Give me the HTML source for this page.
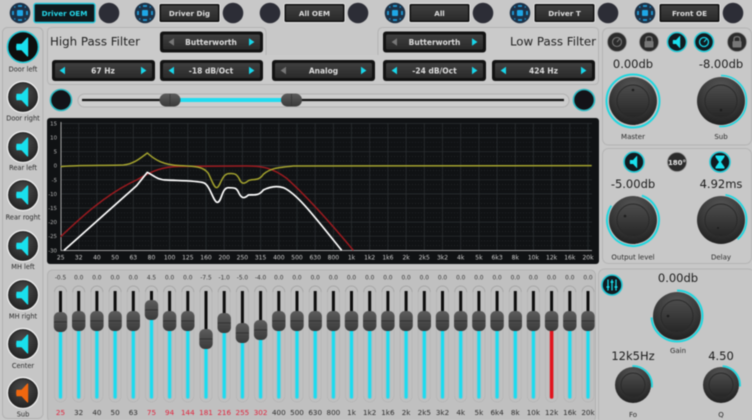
<!DOCTYPE html>
<html><head><meta charset="utf-8"><style>
html,body{margin:0;padding:0;background:#c8c8c8}
svg{display:block;filter:blur(.45px)}
text{font-family:"DejaVu Sans","Liberation Sans",sans-serif;text-anchor:middle}
.top{font-size:7.2px;font-weight:bold;fill:#dedede}
.cb{font-size:7.5px;font-weight:bold;fill:#dcdcdc}
.lab{font-size:6.6px;fill:#2b2b2b}
.val{font-size:11.5px;fill:#1c1c1c}
.fv{font-size:5.8px;fill:#333}
.fl{font-size:7.2px;fill:#2b2b2b}
.flr{font-size:7.2px;fill:#e0233c}
.gx{font-size:6px;fill:#cfcfcf}
.gy{font-size:5.4px;fill:#b9b9b9;text-anchor:end}
.h{font-size:11.8px;fill:#222}
.bk{stroke:#0d0d0d;stroke-width:3;fill:none}
.cy{stroke:#19dcf0;stroke-width:3;fill:none}
.gl{stroke:#7fc4d2;stroke-width:5;fill:none;opacity:.55}
</style></head><body>
<svg width="752" height="420" viewBox="0 0 752 420" xmlns="http://www.w3.org/2000/svg">
<defs>
<linearGradient id="hg" x1="0" y1="0" x2="0" y2="1"><stop offset="0" stop-color="#5c5c5c"/><stop offset="1" stop-color="#3a3a3a"/></linearGradient>
<linearGradient id="bg" x1="0" y1="0" x2="0" y2="1"><stop offset="0" stop-color="#3f3f3f"/><stop offset="1" stop-color="#2a2a2a"/></linearGradient>
<linearGradient id="cap" x1="0" y1="0" x2="0" y2="1"><stop offset="0" stop-color="#4c4c4c"/><stop offset="1" stop-color="#272727"/></linearGradient>
<radialGradient id="kb" cx=".5" cy=".25" r=".85"><stop offset="0" stop-color="#575757"/><stop offset=".6" stop-color="#343434"/><stop offset="1" stop-color="#181818"/></radialGradient>
<radialGradient id="sp" cx=".5" cy=".35" r=".7"><stop offset="0" stop-color="#4c4c4c"/><stop offset="1" stop-color="#222"/></radialGradient>
<g id="k"><rect x="-6.7" y="-10" width="13.4" height="20" rx="5.5" fill="url(#hg)"/><path d="M-6.5 0H6.5" stroke="#2a2a2a" stroke-width=".7"/></g>
<g id="pill"><rect x="-6" y="-114" width="12" height="116" rx="6" fill="none" stroke="#b4b4b4" stroke-width=".7"/><path d="M-6 -108A6 6 0 0 1 6 -108" fill="none" stroke="#a2a2a2" stroke-width=".8"/></g>
<g id="eq"><circle r="10.3" fill="#1d3146"/><rect x="-3" y="-3" width="6" height="6" rx="1" fill="#1ea6e6"/><path d="M-2 -7H2M-2 7H2M-7 -2V2M7 -2V2" stroke="#1e9bd8" stroke-width="1.8"/><path d="M-6 -6H-4.5M4.5 -6H6M-6 6H-4.5M4.5 6H6" stroke="#1b7fb5" stroke-width="1.6"/></g>
<circle id="dk" r="10.3" fill="#2c2d36"/>
<path id="spk" d="M-6.5 -3.2H-1.5L4.2 -9.4Q5.2 -10 5.2 -8.8V8.8Q5.2 10 4.2 9.4L-1.5 3.2H-6.5Q-7.3 0 -6.5 -3.2Z"/>
<g id="sb"><circle r="15.5" fill="#222" stroke="#f2f2f2" stroke-width="1.2"/><circle r="13.8" fill="url(#sp)"/></g>
<g id="kb1"><circle r="24" fill="url(#kb)"/><circle r="16" fill="url(#cap)" stroke="#2a2a2a"/></g>
<g id="kb2"><circle r="18" fill="url(#kb)"/><circle r="12" fill="url(#cap)" stroke="#2a2a2a"/></g>
<g id="lk"><circle r="9.5" fill="#2b2b2b" stroke="#8d8d8d" stroke-width=".7"/><path d="M-3 -1V-3Q-3 -5.4 0 -5.4T3 -3V-1" fill="none" stroke="#777" stroke-width="1.3"/><rect x="-4.5" y="-1" width="9" height="6.5" rx="1" fill="#777"/></g>
<g id="tp"><rect x="0" y="0" width="61" height="19" rx="2" fill="#111" stroke="#e3e3e3" stroke-width="1"/><rect x="2" y="2" width="57" height="15" rx="1" fill="url(#bg)"/></g>
<g id="cbx"><rect x="0" y="0" width="103" height="21" rx="3" fill="#121212"/><rect x="3" y="3" width="97" height="15" rx="1.5" fill="url(#bg)"/></g>
<path id="al" d="M0 -3.8V3.8L-5.4 0Z"/>
<path id="ar" d="M0 -3.8V3.8L5.4 0Z"/>
</defs>

<rect width="752" height="420" fill="#c8c8c8"/>

<!-- top row -->
<use href="#eq" x="20" y="13"/><rect x="34" y="3.5" width="61" height="19" rx="2" fill="#10181c" stroke="#22c8dc" stroke-width="1.4"/><text x="64.5" y="15.8" class="top" style="fill:#25d8ea">Driver OEM</text><use href="#dk" x="109" y="13"/>
<use href="#eq" x="145" y="13"/><use href="#tp" x="159" y="3.5"/><text x="189.5" y="15.8" class="top">Driver Dig</text><use href="#dk" x="233" y="13"/>
<use href="#dk" x="270" y="13"/><use href="#tp" x="284" y="3.5"/><text x="314.5" y="15.8" class="top">All OEM</text><use href="#dk" x="358" y="13"/>
<use href="#eq" x="395" y="13"/><use href="#tp" x="409" y="3.5"/><text x="439.5" y="15.8" class="top">All</text><use href="#dk" x="483" y="13"/>
<use href="#eq" x="520" y="13"/><use href="#tp" x="534" y="3.5"/><text x="564.5" y="15.8" class="top">Driver T</text><use href="#dk" x="608" y="13"/>
<use href="#eq" x="645" y="13"/><use href="#tp" x="659" y="3.5"/><text x="689.5" y="15.8" class="top">Front OE</text><use href="#dk" x="733" y="13"/>

<!-- sidebar -->
<rect x="2.5" y="27.5" width="40.5" height="391" rx="5" fill="#c6c6c6" stroke="#b2b2b2"/>
<circle cx="23" cy="47" r="15.5" fill="#0e0e0e" stroke="#22c9d6" stroke-width="1.6"/><use href="#spk" x="23" y="47" fill="#19e0ee"/><text x="23" y="71.5" class="lab">Door left</text>
<use href="#sb" x="23" y="97"/><use href="#spk" x="23" y="97" fill="#19e0ee"/><text x="23" y="120.5" class="lab">Door right</text>
<use href="#sb" x="23" y="147"/><use href="#spk" x="23" y="147" fill="#19e0ee"/><text x="23" y="170" class="lab">Rear left</text>
<use href="#sb" x="23" y="195"/><use href="#spk" x="23" y="195" fill="#19e0ee"/><text x="23" y="219.5" class="lab">Rear roght</text>
<use href="#sb" x="23" y="246"/><use href="#spk" x="23" y="246" fill="#19e0ee"/><text x="23" y="269" class="lab">MH left</text>
<use href="#sb" x="23" y="295"/><use href="#spk" x="23" y="295" fill="#19e0ee"/><text x="23" y="318.5" class="lab">MH right</text>
<use href="#sb" x="23" y="344"/><use href="#spk" x="23" y="344" fill="#19e0ee"/><text x="23" y="368" class="lab">Center</text>
<use href="#sb" x="23" y="393"/><use href="#spk" x="23" y="393" fill="#f0670f"/><text x="23" y="416.5" class="lab">Sub</text>

<!-- filter panel -->
<path d="M52 27.5H261Q266 27.5 266 33V84.5H52Q47.5 84.5 47.5 80V32Q47.5 27.5 52 27.5Z" fill="#cacaca" stroke="#b4b4b4"/>
<path d="M383 27.5H594Q598.5 27.5 598.5 32V80Q598.5 84.5 594 84.5H378V33Q378 27.5 383 27.5Z" fill="#cacaca" stroke="#b4b4b4"/>
<rect x="265" y="55" width="114" height="29" fill="#cacaca"/><path d="M266 84.5H378" stroke="#b4b4b4"/>
<text x="50" y="45.5" class="h" style="text-anchor:start">High Pass Filter</text>
<text x="596" y="45.5" class="h" style="text-anchor:end">Low Pass Filter</text>
<use href="#cbx" x="160" y="31.5"/><use href="#al" x="174" y="42" fill="#777"/><use href="#ar" x="249" y="42" fill="#19d6ea"/><text x="211" y="44.8" class="cb">Butterworth</text>
<use href="#cbx" x="52" y="60"/><use href="#al" x="65" y="70.5" fill="#19d6ea"/><use href="#ar" x="141" y="70.5" fill="#19d6ea"/><text x="103" y="73.3" class="cb">67 Hz</text>
<use href="#cbx" x="160" y="60"/><use href="#al" x="174" y="70.5" fill="#19d6ea"/><use href="#ar" x="249" y="70.5" fill="#19d6ea"/><text x="211" y="73.3" class="cb">-18 dB/Oct</text>
<use href="#cbx" x="272" y="60"/><use href="#al" x="286" y="70.5" fill="#777"/><use href="#ar" x="361" y="70.5" fill="#19d6ea"/><text x="323.5" y="73.3" class="cb">Analog</text>
<use href="#cbx" x="383" y="31.5"/><use href="#al" x="397" y="42" fill="#777"/><use href="#ar" x="472" y="42" fill="#19d6ea"/><text x="434.5" y="44.8" class="cb">Butterworth</text>
<use href="#cbx" x="383" y="60"/><use href="#al" x="397" y="70.5" fill="#19d6ea"/><use href="#ar" x="472" y="70.5" fill="#19d6ea"/><text x="434.5" y="73.3" class="cb">-24 dB/Oct</text>
<use href="#cbx" x="492" y="60"/><use href="#al" x="506" y="70.5" fill="#19d6ea"/><use href="#ar" x="581" y="70.5" fill="#19d6ea"/><text x="543.5" y="73.3" class="cb">424 Hz</text>

<!-- crossover slider -->
<circle cx="61" cy="100" r="10.5" fill="#131318" stroke="#2bb9c2" stroke-width="1.6"/>
<circle cx="584" cy="100" r="10.5" fill="#131318" stroke="#2bb9c2" stroke-width="1.6"/>
<rect x="78" y="94" width="491" height="13" rx="6.5" fill="#cdcdcd" stroke="#b2b2b2"/>
<path d="M82 100H564" stroke="#141414" stroke-width="2.2"/>
<path d="M170 100H291" stroke="#22dcf0" stroke-width="4"/>
<rect x="159.5" y="93.5" width="21" height="13" rx="6.5" fill="url(#hg)"/><path d="M170 94V106" stroke="#333" stroke-width=".7"/>
<rect x="281" y="93.5" width="21" height="13" rx="6.5" fill="url(#hg)"/><path d="M291.5 94V106" stroke="#333" stroke-width=".7"/>

<!-- graph -->
<rect x="47" y="118" width="552" height="146" rx="3" fill="#101214"/>
<g stroke="#2c3033" stroke-width=".7" fill="none">
<path d="M78.7 123V250M96.9 123V250M115.1 123V250M133.3 123V250M151.5 123V250M169.6 123V250M187.8 123V250M206 123V250M224.2 123V250M242.4 123V250M260.6 123V250M278.8 123V250M297 123V250M315.2 123V250M333.4 123V250M351.5 123V250M369.7 123V250M387.9 123V250M406.1 123V250M424.3 123V250M442.5 123V250M460.7 123V250M478.9 123V250M497.1 123V250M515.3 123V250M533.4 123V250M551.6 123V250M569.8 123V250M588 123V250"/>
<path d="M61 123.5H592M61 137.6H592M61 151.7H592M61 179.8H592M61 193.9H592M61 208H592M61 222.1H592M61 236.2H592"/>
<path stroke-dasharray="1 2" stroke="#262a2d" d="M61 128.2H592M61 132.9H592M61 142.3H592M61 147H592M61 156.4H592M61 161.1H592M61 170.5H592M61 175.2H592M61 184.6H592M61 189.3H592M61 198.7H592M61 203.4H592M61 212.8H592M61 217.5H592M61 226.9H592M61 231.6H592M61 240.9H592M61 245.6H592"/>
</g>
<path d="M61 122V250.5H592" stroke="#c9c9c9" stroke-width=".8" fill="none"/>
<path d="M61 165.7H592" stroke="#3a3d40" stroke-width=".8"/>
<g transform="translate(40 115) scale(.33333)" fill="none" stroke-linejoin="round">
<path d="M62 365C120 310 200 235 290 195C340 165 370 155 420 154L620 153C670 153 700 160 740 190C790 235 860 310 940 406" stroke="#9c1a1f" stroke-width="4.5"/>
<path d="M62 155C100 150 200 152 250 150C280 148 300 130 322 114C345 135 370 150 420 152C470 154 490 155 505 175C515 195 522 218 530 218C540 218 545 178 565 176C585 174 590 178 597 190C603 205 610 210 625 197C640 190 655 200 670 178C690 160 710 158 760 153L1655 152" stroke="#a4a32e" stroke-width="4.5"/>
<path d="M72 406L290 212L322 172C340 180 350 195 380 195C420 197 470 197 490 203C510 208 520 262 532 262C545 262 545 218 565 218C585 218 590 218 597 235C605 250 612 252 625 240C640 238 655 245 670 225C690 215 710 212 730 218C770 235 820 300 905 406" stroke="#fff" stroke-width="5"/>
</g>
<text x="57" y="125.5" class="gy">15</text><text x="57" y="139.5" class="gy">10</text><text x="57" y="153.6" class="gy">5</text><text x="57" y="167.7" class="gy">0</text><text x="57" y="181.8" class="gy">-5</text><text x="57" y="195.9" class="gy">-10</text><text x="57" y="210" class="gy">-15</text><text x="57" y="224" class="gy">-20</text><text x="57" y="238" class="gy">-25</text><text x="57" y="252.3" class="gy">-30</text>
<text x="60.7" y="259.5" class="gx">25</text><text x="78.7" y="259.5" class="gx">32</text><text x="96.9" y="259.5" class="gx">40</text><text x="115.1" y="259.5" class="gx">50</text><text x="133.3" y="259.5" class="gx">63</text><text x="151.5" y="259.5" class="gx">80</text><text x="169.6" y="259.5" class="gx">100</text><text x="187.8" y="259.5" class="gx">125</text><text x="206" y="259.5" class="gx">160</text><text x="224.2" y="259.5" class="gx">200</text><text x="242.4" y="259.5" class="gx">250</text><text x="260.6" y="259.5" class="gx">315</text><text x="278.8" y="259.5" class="gx">400</text><text x="297" y="259.5" class="gx">500</text><text x="315.2" y="259.5" class="gx">630</text><text x="333.4" y="259.5" class="gx">800</text><text x="351.5" y="259.5" class="gx">1k</text><text x="369.7" y="259.5" class="gx">1k2</text><text x="387.9" y="259.5" class="gx">1k6</text><text x="406.1" y="259.5" class="gx">2k</text><text x="424.3" y="259.5" class="gx">2k5</text><text x="442.5" y="259.5" class="gx">3k2</text><text x="460.7" y="259.5" class="gx">4k</text><text x="478.9" y="259.5" class="gx">5k</text><text x="497.1" y="259.5" class="gx">6k3</text><text x="515.3" y="259.5" class="gx">8k</text><text x="533.4" y="259.5" class="gx">10k</text><text x="551.6" y="259.5" class="gx">12k</text><text x="569.8" y="259.5" class="gx">16k</text><text x="588" y="259.5" class="gx">20k</text>

<!-- right panels -->
<rect x="602.5" y="28" width="149" height="117" rx="6" fill="#c8c8c8" stroke="#b4b4b4"/>
<circle cx="617" cy="42" r="9.5" fill="#2b2b2b" stroke="#8d8d8d" stroke-width=".7"/><circle cx="617" cy="42" r="4.5" fill="none" stroke="#777" stroke-width="1.1"/><path d="M617 42L619.5 39" stroke="#777"/>
<use href="#lk" x="649" y="42"/>
<circle cx="677" cy="42" r="9.5" fill="#111a20" stroke="#22c9d6" stroke-width="1.5"/><use href="#spk" transform="translate(677 42) scale(.62)" fill="#19e0ee"/>
<circle cx="704" cy="42" r="9.5" fill="#111a20" stroke="#22c9d6" stroke-width="1.5"/><circle cx="704" cy="42" r="4.5" fill="none" stroke="#18d6ea" stroke-width="1.3"/><path d="M704 42L706.5 39" stroke="#18d6ea"/>
<use href="#lk" x="737" y="42"/>
<text x="633" y="68" class="val">0.00db</text><text x="721" y="68" class="val">-8.00db</text>
<use href="#kb1" x="633" y="101"/><use href="#kb1" x="721" y="101"/>
<circle cx="633" cy="101" r="26.5" fill="none" stroke="#1fd6df" stroke-width="2"/>
<circle cx="721" cy="101" r="25.5" fill="none" stroke="#1fd6df" stroke-width="1.6" pathLength="360" stroke-dasharray="185 360" transform="rotate(-90 721 101)"/>
<circle cx="633" cy="90" r="1.3" fill="#1d1d1d"/><circle cx="721" cy="110" r="1.3" fill="#1d1d1d"/>
<text x="633" y="139" class="lab" style="font-size:7px">Master</text><text x="721" y="139" class="lab" style="font-size:7px">Sub</text>

<rect x="602.5" y="148.5" width="149" height="115" rx="6" fill="#c8c8c8" stroke="#b4b4b4"/>
<circle cx="634" cy="162" r="10" fill="#111a20" stroke="#22c9d6" stroke-width="1.6"/><use href="#spk" transform="translate(634 162) scale(.62)" fill="#19e0ee"/>
<circle cx="677" cy="162" r="9.5" fill="#2b2b2b" stroke="#8d8d8d" stroke-width=".7"/><text x="677" y="165" style="font-size:7px;font-weight:bold;fill:#e6e6e6">180°</text>
<circle cx="720" cy="162" r="10" fill="#111a20" stroke="#22c9d6" stroke-width="1.6"/><path d="M715.5 155.5H724.5V157L721 162L724.5 167V168.5H715.5V167L719 162L715.5 157Z" fill="#19e0ee"/>
<text x="633" y="188" class="val">-5.00db</text><text x="721" y="188" class="val">4.92ms</text>
<use href="#kb1" x="633" y="220"/><use href="#kb1" x="721" y="220"/>
<circle cx="633" cy="220" r="26" fill="none" stroke="#1fd6df" stroke-width="2" pathLength="360" stroke-dasharray="285 360" transform="rotate(-70 633 220)"/>
<circle cx="721" cy="220" r="25.5" fill="none" stroke="#1fd6df" stroke-width="1.8" pathLength="360" stroke-dasharray="130 360" transform="rotate(-80 721 220)"/>
<circle cx="625" cy="216" r="1.3" fill="#1d1d1d"/><circle cx="718" cy="228" r="1" fill="#1d1d1d"/>
<text x="633" y="259.5" class="lab" style="font-size:7px">Output level</text><text x="721" y="259.5" class="lab" style="font-size:7px">Delay</text>

<rect x="598.5" y="269" width="156" height="155" rx="6" fill="#c6c6c6" stroke="#b4b4b4"/>
<circle cx="612" cy="285" r="10" fill="#111a20" stroke="#22c9d6" stroke-width="1.6"/>
<path d="M608 279.5V290.5M612 279.5V290.5M616 279.5V290.5" stroke="#19e0ee" stroke-width="1.2"/><path d="M606.5 287H609.5M610.5 282H613.5M614.5 287H617.5" stroke="#19e0ee" stroke-width="1.6"/>
<text x="678" y="282" class="val">0.00db</text>
<use href="#kb1" x="677" y="316"/>
<circle cx="677" cy="316" r="25.5" fill="none" stroke="#1fd6df" stroke-width="2" pathLength="360" stroke-dasharray="268 360" transform="rotate(-90 677 316)"/>
<circle cx="668" cy="316" r="1.3" fill="#1d1d1d"/>
<text x="678" y="353" class="lab" style="font-size:7px">Gain</text>
<text x="633" y="360" class="val">12k5Hz</text><text x="721" y="360" class="val">4.50</text>
<use href="#kb2" x="633" y="385"/><use href="#kb2" x="721" y="385"/>
<circle cx="633" cy="385" r="19" fill="none" stroke="#1fd6df" stroke-width="1.8" pathLength="360" stroke-dasharray="100 360" transform="rotate(-92 633 385)"/>
<circle cx="721" cy="385" r="19" fill="none" stroke="#1fd6df" stroke-width="1.8" pathLength="360" stroke-dasharray="90 360" transform="rotate(-85 721 385)"/>
<text x="633" y="417" class="lab" style="font-size:7px">Fo</text><text x="721" y="417" class="lab" style="font-size:7px">Q</text>

<!-- fader panel -->
<rect x="47.5" y="270" width="548" height="152" rx="5" fill="#c0c0c0" stroke="#b2b2b2"/>
<g>
<use href="#pill" x="60.5" y="400"/><use href="#pill" x="78.7" y="400"/><use href="#pill" x="96.9" y="400"/><use href="#pill" x="115.1" y="400"/><use href="#pill" x="133.3" y="400"/><use href="#pill" x="151.5" y="400"/><use href="#pill" x="169.6" y="400"/><use href="#pill" x="187.8" y="400"/><use href="#pill" x="206" y="400"/><use href="#pill" x="224.2" y="400"/><use href="#pill" x="242.4" y="400"/><use href="#pill" x="260.6" y="400"/><use href="#pill" x="278.8" y="400"/><use href="#pill" x="297" y="400"/><use href="#pill" x="315.2" y="400"/><use href="#pill" x="333.4" y="400"/><use href="#pill" x="351.5" y="400"/><use href="#pill" x="369.7" y="400"/><use href="#pill" x="387.9" y="400"/><use href="#pill" x="406.1" y="400"/><use href="#pill" x="424.3" y="400"/><use href="#pill" x="442.5" y="400"/><use href="#pill" x="460.7" y="400"/><use href="#pill" x="478.9" y="400"/><use href="#pill" x="497.1" y="400"/><use href="#pill" x="515.3" y="400"/><use href="#pill" x="533.4" y="400"/><use href="#pill" x="551.6" y="400"/><use href="#pill" x="569.8" y="400"/><use href="#pill" x="588" y="400"/>
</g>
<path class="bk" d="M60.5 291V322M78.7 291V321M96.9 291V321M115.1 291V321M133.3 291V321M151.5 291V310M169.6 291V321M187.8 291V321M206 291V339M224.2 291V323M242.4 291V333M260.6 291V330M278.8 291V321M297 291V321M315.2 291V321M333.4 291V321M351.5 291V321M369.7 291V321M387.9 291V321M406.1 291V321M424.3 291V321M442.5 291V321M460.7 291V321M478.9 291V321M497.1 291V321M515.3 291V321M533.4 291V321M551.6 291V321M569.8 291V321M588 291V321"/>
<path class="gl" stroke-linecap="round" d="M60.5 322V397M78.7 321V397M96.9 321V397M115.1 321V397M133.3 321V397M151.5 310V397M169.6 321V397M187.8 321V397M206 339V397M224.2 323V397M242.4 333V397M260.6 330V397M278.8 321V397M297 321V397M315.2 321V397M333.4 321V397M351.5 321V397M369.7 321V397M387.9 321V397M406.1 321V397M424.3 321V397M442.5 321V397M460.7 321V397M478.9 321V397M497.1 321V397M515.3 321V397M533.4 321V397M569.8 321V397M588 321V397"/>
<path class="cy" stroke-linecap="round" d="M60.5 322V397M78.7 321V397M96.9 321V397M115.1 321V397M133.3 321V397M151.5 310V397M169.6 321V397M187.8 321V397M206 339V397M224.2 323V397M242.4 333V397M260.6 330V397M278.8 321V397M297 321V397M315.2 321V397M333.4 321V397M351.5 321V397M369.7 321V397M387.9 321V397M406.1 321V397M424.3 321V397M442.5 321V397M460.7 321V397M478.9 321V397M497.1 321V397M515.3 321V397M533.4 321V397M569.8 321V397M588 321V397"/>
<path d="M551.6 321V397" stroke="#e0141e" stroke-width="3.6" stroke-linecap="round"/>
<use href="#k" x="60.5" y="322"/><use href="#k" x="78.7" y="321"/><use href="#k" x="96.9" y="321"/><use href="#k" x="115.1" y="321"/><use href="#k" x="133.3" y="321"/><use href="#k" x="151.5" y="310"/><use href="#k" x="169.6" y="321"/><use href="#k" x="187.8" y="321"/><use href="#k" x="206" y="339"/><use href="#k" x="224.2" y="323"/><use href="#k" x="242.4" y="333"/><use href="#k" x="260.6" y="330"/><use href="#k" x="278.8" y="321"/><use href="#k" x="297" y="321"/><use href="#k" x="315.2" y="321"/><use href="#k" x="333.4" y="321"/><use href="#k" x="351.5" y="321"/><use href="#k" x="369.7" y="321"/><use href="#k" x="387.9" y="321"/><use href="#k" x="406.1" y="321"/><use href="#k" x="424.3" y="321"/><use href="#k" x="442.5" y="321"/><use href="#k" x="460.7" y="321"/><use href="#k" x="478.9" y="321"/><use href="#k" x="497.1" y="321"/><use href="#k" x="515.3" y="321"/><use href="#k" x="533.4" y="321"/><use href="#k" x="551.6" y="321"/><use href="#k" x="569.8" y="321"/><use href="#k" x="588" y="321"/>
<text x="60.5" y="279.5" class="fv">-0.5</text><text x="78.7" y="279.5" class="fv">0.0</text><text x="96.9" y="279.5" class="fv">0.0</text><text x="115.1" y="279.5" class="fv">0.0</text><text x="133.3" y="279.5" class="fv">0.0</text><text x="151.5" y="279.5" class="fv">4.5</text><text x="169.6" y="279.5" class="fv">0.0</text><text x="187.8" y="279.5" class="fv">0.0</text><text x="206" y="279.5" class="fv">-7.5</text><text x="224.2" y="279.5" class="fv">-1.0</text><text x="242.4" y="279.5" class="fv">-5.0</text><text x="260.6" y="279.5" class="fv">-4.0</text><text x="278.8" y="279.5" class="fv">0.0</text><text x="297" y="279.5" class="fv">0.0</text><text x="315.2" y="279.5" class="fv">0.0</text><text x="333.4" y="279.5" class="fv">0.0</text><text x="351.5" y="279.5" class="fv">0.0</text><text x="369.7" y="279.5" class="fv">0.0</text><text x="387.9" y="279.5" class="fv">0.0</text><text x="406.1" y="279.5" class="fv">0.0</text><text x="424.3" y="279.5" class="fv">0.0</text><text x="442.5" y="279.5" class="fv">0.0</text><text x="460.7" y="279.5" class="fv">0.0</text><text x="478.9" y="279.5" class="fv">0.0</text><text x="497.1" y="279.5" class="fv">0.0</text><text x="515.3" y="279.5" class="fv">0.0</text><text x="533.4" y="279.5" class="fv">0.0</text><text x="551.6" y="279.5" class="fv">0.0</text><text x="569.8" y="279.5" class="fv">0.0</text><text x="588" y="279.5" class="fv">0.0</text>
<text x="60.5" y="415" class="flr">25</text><text x="78.7" y="415" class="fl">32</text><text x="96.9" y="415" class="fl">40</text><text x="115.1" y="415" class="fl">50</text><text x="133.3" y="415" class="fl">63</text><text x="151.5" y="415" class="flr">75</text><text x="169.6" y="415" class="flr">94</text><text x="187.8" y="415" class="flr">144</text><text x="206" y="415" class="flr">181</text><text x="224.2" y="415" class="flr">216</text><text x="242.4" y="415" class="flr">255</text><text x="260.6" y="415" class="flr">302</text><text x="278.8" y="415" class="fl">400</text><text x="297" y="415" class="fl">500</text><text x="315.2" y="415" class="fl">630</text><text x="333.4" y="415" class="fl">800</text><text x="351.5" y="415" class="fl">1k</text><text x="369.7" y="415" class="fl">1k2</text><text x="387.9" y="415" class="fl">1k6</text><text x="406.1" y="415" class="fl">2k</text><text x="424.3" y="415" class="fl">2k5</text><text x="442.5" y="415" class="fl">3k2</text><text x="460.7" y="415" class="fl">4k</text><text x="478.9" y="415" class="fl">5k</text><text x="497.1" y="415" class="fl">6k4</text><text x="515.3" y="415" class="fl">8k</text><text x="533.4" y="415" class="fl">10k</text><text x="551.6" y="415" class="fl">12k</text><text x="569.8" y="415" class="fl">16k</text><text x="588" y="415" class="fl">20k</text>
</svg>
</body></html>
